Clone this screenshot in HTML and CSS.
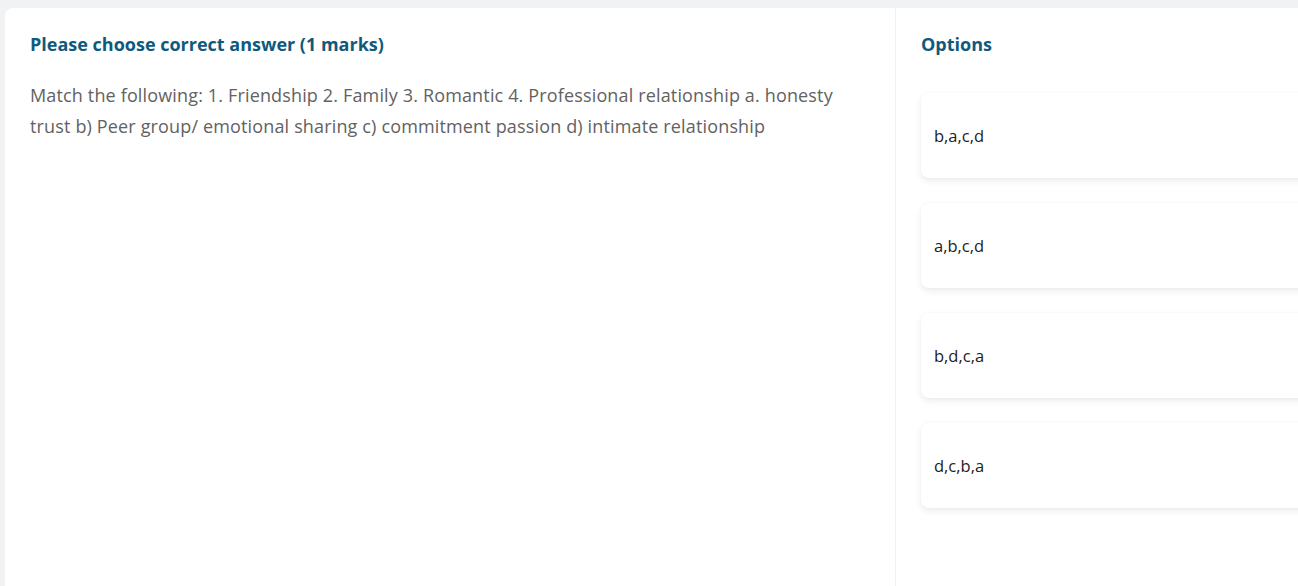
FILE: index.html
```html
<!DOCTYPE html>
<html>
<head>
<meta charset="utf-8">
<link rel="stylesheet" href="styles.css">
</head>
<body>
<div class="sheet">
  <section class="question">
    <h2 class="heading">Please choose correct answer (1 marks)</h2>
    <p class="text">Match the following: 1. Friendship 2. Family 3. Romantic 4. Professional relationship a. honesty trust b) Peer group/ emotional sharing c) commitment passion d) intimate relationship</p>
  </section>
  <section class="options">
    <h2 class="heading">Options</h2>
    <div class="list">
      <div class="card">b,a,c,d</div>
      <div class="card">a,b,c,d</div>
      <div class="card">b,d,c,a</div>
      <div class="card">d,c,b,a</div>
    </div>
  </section>
</div>
</body>
</html>
```

FILE: styles.css
```css
html, body {
  margin: 0;
  padding: 0;
  height: 100%;
  overflow: hidden;
}
body {
  background: #f1f2f4;
  font-family: "Open Sans", "Noto Sans", sans-serif;
}
.sheet {
  margin: 8px 0 0 5px;
  height: calc(100% - 8px);
  background: #fff;
  border-radius: 8px 0 0 0;
  display: flex;
}
.question {
  width: 891px;
  flex: none;
  box-sizing: border-box;
  padding: 25px 25px 0 25px;
  border-right: 1px solid #eef0f2;
}
.heading {
  margin: 0;
  font-size: 18px;
  line-height: 22px;
  font-weight: 700;
  color: #0f5a7c;
}
.text {
  margin: 25px 0 0 0;
  font-size: 18px;
  letter-spacing: 0.15px;
  line-height: 31px;
  color: #626262;
  max-width: 820px;
}
.options {
  flex: none;
  width: 440px;
  box-sizing: border-box;
  padding: 25px 0 0 25px;
}
.list {
  margin-top: 38px;
  display: flex;
  flex-direction: column;
  gap: 25px;
}
.card {
  height: 85px;
  box-sizing: border-box;
  display: flex;
  align-items: center;
  padding-left: 13px;
  background: #fff;
  border-radius: 8px;
  box-shadow: 0 3px 7px rgba(0, 0, 0, 0.08), 0 0 2px rgba(0, 0, 0, 0.04);
  font-size: 16.5px;
  color: #1c1c1c;
}
```
